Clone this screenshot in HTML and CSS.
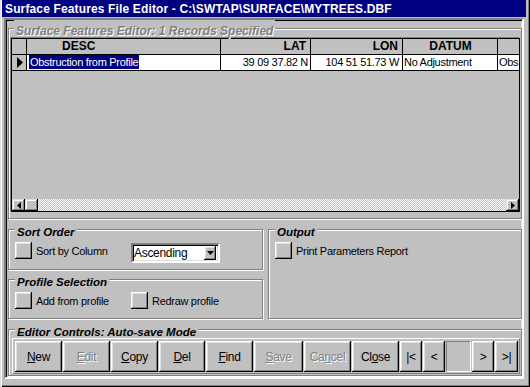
FILE: index.html
```html
<!DOCTYPE html>
<html lang="en">
<head>
    <meta charset="UTF-8">
    <title>Surface Features File Editor</title>
    <link rel="stylesheet" href="styles.css">
</head>
<body>
    <div class="window">
        <div class="titlebar">Surface Features File Editor - C:\SWTAP\SURFACE\MYTREES.DBF</div>
        <div class="client">
            <fieldset class="group group-records">
                <legend class="disabled">Surface Features Editor: 1 Records Specified</legend>
                <div class="grid">
                    <div class="grid-row grid-head">
                        <div class="cell ind"></div>
                        <div class="cell desc">DESC</div>
                        <div class="cell lat">LAT</div>
                        <div class="cell lon">LON</div>
                        <div class="cell datum">DATUM</div>
                        <div class="cell obs"></div>
                    </div>
                    <div class="grid-row grid-data">
                        <div class="cell ind">
                            <svg width="6" height="11" viewBox="0 0 6 11"><polygon points="0,0 6,5.5 0,11" fill="#000"/></svg>
                        </div>
                        <div class="cell desc"><span class="selected">Obstruction from Profile</span></div>
                        <div class="cell lat">39 09 37.82 N</div>
                        <div class="cell lon">104 51 51.73 W</div>
                        <div class="cell datum">No Adjustment</div>
                        <div class="cell obs">Obs</div>
                    </div>
                    <div class="grid-fill"></div>
                    <div class="hscroll">
                        <div class="sb-btn">
                            <svg width="4" height="7" viewBox="0 0 4 7"><polygon points="4,0 0,3.5 4,7" fill="#000"/></svg>
                        </div>
                        <div class="sb-btn"></div>
                        <div class="sb-track"></div>
                        <div class="sb-btn">
                            <svg width="4" height="7" viewBox="0 0 4 7"><polygon points="0,0 4,3.5 0,7" fill="#000"/></svg>
                        </div>
                    </div>
                </div>
            </fieldset>

            <div class="options">
                <div class="options-left">
                    <fieldset class="group group-sort">
                        <legend>Sort Order</legend>
                        <div class="opt-row">
                            <div class="check"><span class="sqbtn"></span>Sort by Column</div>
                            <div class="combo">
                                <span class="combo-text">Ascending</span>
                                <span class="combo-btn">
                                    <svg width="7" height="4" viewBox="0 0 7 4"><polygon points="0,0 7,0 3.5,4" fill="#000"/></svg>
                                </span>
                            </div>
                        </div>
                    </fieldset>
                    <fieldset class="group group-profile">
                        <legend>Profile Selection</legend>
                        <div class="opt-row">
                            <div class="check"><span class="sqbtn"></span>Add from profile</div>
                            <div class="check"><span class="sqbtn"></span>Redraw profile</div>
                        </div>
                    </fieldset>
                </div>
                <fieldset class="group group-output">
                    <legend>Output</legend>
                    <div class="opt-row">
                        <div class="check"><span class="sqbtn"></span>Print Parameters Report</div>
                    </div>
                </fieldset>
            </div>

            <fieldset class="group group-editor">
                <legend>Editor Controls: Auto-save Mode</legend>
                <div class="toolbar">
                    <button class="btn"><u>N</u>ew</button>
                    <button class="btn" disabled><u>E</u>dit</button>
                    <button class="btn"><u>C</u>opy</button>
                    <button class="btn btn-del"><u>D</u>el</button>
                    <button class="btn"><u>F</u>ind</button>
                    <button class="btn btn-save" disabled><u>S</u>ave</button>
                    <button class="btn" disabled>Ca<u>n</u>cel</button>
                    <button class="btn">Cl<u>o</u>se</button>
                    <button class="btn btn-nav">|&lt;</button>
                    <button class="btn btn-nav">&lt;</button>
                    <div class="recno"></div>
                    <button class="btn btn-nav">&gt;</button>
                    <button class="btn btn-nav btn-last">&gt;|</button>
                </div>
            </fieldset>
        </div>
    </div>
</body>
</html>
```

FILE: styles.css
```css
body {
    margin: 0;
    background: #c0c0c0;
    font-family: "Liberation Sans", Arial, sans-serif;
    font-size: 11px;
    letter-spacing: -0.3px;
    color: #000;
}
.window {
    width: 530px;
    height: 387px;
    box-sizing: border-box;
    padding: 0 6px 0 2px;
    background: #c0c0c0;
    box-shadow: inset 1px 0 #dfdfdf, inset 2px 0 #fff, inset -1px -1px #000, inset -2px -2px #808080;
}
.titlebar {
    height: 17px;
    margin-right: -2px;
    padding: 2px 0 0 3px;
    box-sizing: border-box;
    background: #000080;
    color: #fff;
    font: bold 12px "Liberation Sans", Arial, sans-serif;
    letter-spacing: 0.14px;
    line-height: 14px;
    white-space: nowrap;
}
.client {
    margin: 1px 0 0 2px;
    width: 520px;
    box-sizing: border-box;
    padding: 0 0 1px 2px;
    border: 2px solid;
    border-color: #808080 #fff #fff #808080;
    box-shadow: inset 1px 1px #000, inset -1px -1px #dfdfdf;
}

/* etched group frames */
.group {
    margin: 0;
    min-width: 0;
    border: 1px solid #808080;
    box-shadow: 1px 1px 0 #fff, inset 1px 1px 0 #fff;
}
.group legend {
    padding: 5px 2px 0;
    background: #c0c0c0;
    font: bold italic 11.5px "Liberation Sans", Arial, sans-serif;
    letter-spacing: 0;
    line-height: 12px;
}
.group legend.disabled {
    font-size: 12px;
    color: #808080;
    text-shadow: 1px 1px 0 #fff;
}
.group-records {
    padding: 1px 1px 6px 2px;
}
.group-records legend,
.group-editor legend {
    margin-left: 3px;
}

/* data grid */
.grid {
    height: 174px;
    box-sizing: border-box;
    border: 1px solid #000;
    box-shadow: -1px -1px 0 #808080;
    display: flex;
    flex-direction: column;
    overflow: hidden;
}
.grid-row {
    display: flex;
    flex: none;
    height: 16px;
    box-sizing: border-box;
    border-bottom: 1px solid #000;
}
.cell {
    flex: none;
    box-sizing: border-box;
    border-right: 1px solid #000;
    line-height: 15px;
    white-space: nowrap;
    overflow: hidden;
}
.ind { width: 15px; }
.desc { width: 194px; padding-left: 2px; }
.lat { width: 90px; text-align: right; padding-right: 2px; }
.lon { width: 92px; text-align: right; padding-right: 3px; }
.datum { width: 95px; padding-left: 1px; }
.obs { flex: 1; border-right: 0; padding-left: 1px; }
.grid-head .cell {
    font: bold 12px "Liberation Sans", Arial, sans-serif;
    letter-spacing: 0;
    line-height: 15px;
}
.grid-head .desc { padding-left: 35px; }
.grid-head .lat,
.grid-head .lon { padding-right: 4px; }
.grid-head .datum { text-align: center; }
.grid-data .cell { background: #fff; }
.grid-data .ind {
    background: #c0c0c0;
    display: flex;
    align-items: center;
    padding-left: 5px;
}
.selected {
    display: inline-block;
    padding: 0 1px;
    line-height: 14px;
    background: #000080;
    color: #fff;
}
.grid-fill { flex: 1; }
.hscroll {
    display: flex;
    flex: none;
    height: 12px;
}
.sb-btn {
    width: 13px;
    flex: none;
    display: flex;
    align-items: center;
    justify-content: center;
    box-shadow: inset -1px -1px #000, inset 1px 1px #dfdfdf, inset -2px -2px #808080, inset 2px 2px #fff;
}
.sb-track {
    flex: 1;
    background: repeating-conic-gradient(#fff 0 25%, #c0c0c0 0 50%) 0 0 / 2px 2px;
}

/* option groups */
.options {
    display: grid;
    grid-template-columns: 255px 254px;
    column-gap: 5px;
    margin-top: 2px;
}
.options-left {
    display: flex;
    flex-direction: column;
}
.group-sort { padding: 4px 1px 6px 6px; }
.group-profile { margin-top: 1px; padding: 4px 1px 9px 6px; }
.group-output { padding: 4px 1px 0 6px; }
.opt-row {
    display: flex;
    align-items: flex-start;
}
.check {
    display: flex;
    align-items: center;
    gap: 4px;
    width: 116px;
    height: 17px;
    white-space: nowrap;
}
.sqbtn {
    width: 17px;
    height: 17px;
    flex: none;
    box-shadow: inset -1px -1px #000, inset 1px 1px #fff, inset -2px -2px #808080, inset 2px 2px #dfdfdf;
}
.combo {
    margin-top: 1px;
    width: 89px;
    height: 20px;
    box-sizing: border-box;
    display: flex;
    align-items: center;
    background: #fff;
    border: 2px solid;
    border-color: #808080 #fff #fff #808080;
    box-shadow: inset 1px 1px #000, inset -1px -1px #dfdfdf;
    padding: 0 2px 0 1px;
    font-size: 12px;
}
.combo-text { flex: 1; }
.combo-btn {
    width: 12px;
    height: 14px;
    display: flex;
    align-items: center;
    justify-content: center;
    background: #c0c0c0;
    box-shadow: inset -1px -1px #000, inset 1px 1px #fff, inset -2px -2px #808080, inset 2px 2px #dfdfdf;
}

/* editor controls */
.group-editor {
    margin-top: 2px;
    padding: 0 1px 1px 3px;
}
.toolbar {
    display: flex;
    gap: 1px;
    padding: 2px 1px 1px 2px;
    border: 1px solid;
    border-color: #fff #808080 #808080 #fff;
}
.btn {
    width: 47px;
    height: 31px;
    padding: 0;
    border: 0;
    background: #c0c0c0;
    font: 12px "Liberation Sans", Arial, sans-serif;
    letter-spacing: -0.3px;
    color: #000;
    box-shadow: inset -1px -1px #000, inset 1px 1px #fff, inset -2px -2px #808080, inset 2px 2px #dfdfdf;
}
.btn:disabled {
    color: #808080;
    text-shadow: 1px 1px 0 #fff;
}
.btn-del { width: 46px; }
.btn-save { width: 49px; }
.btn-nav { width: 22px; }
.btn-last { width: 23px; }
.recno {
    width: 25px;
    height: 31px;
    box-sizing: border-box;
    border: 1px solid;
    border-color: #808080 #fff #fff #808080;
}
```
